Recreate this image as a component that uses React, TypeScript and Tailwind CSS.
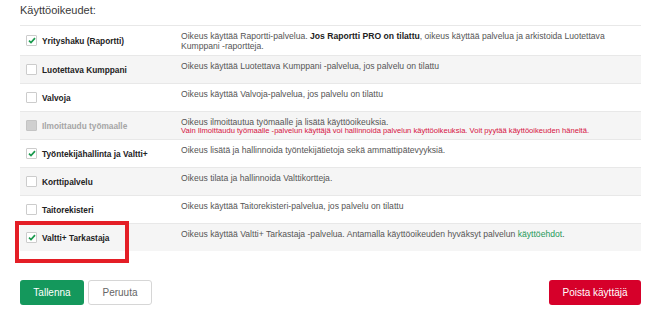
import React from "react";

type Row = {
  label: string;
  checked?: boolean;
  disabled?: boolean;
  desc: React.ReactNode;
  note?: string;
};

const rows: Row[] = [
  {
    label: "Yrityshaku (Raportti)",
    checked: true,
    desc: (
      <>
        Oikeus käyttää Raportti-palvelua. <b className="font-bold text-[#222]">Jos Raportti PRO on tilattu</b>, oikeus
        käyttää palvelua ja arkistoida Luotettava Kumppani -raportteja.
      </>
    ),
  },
  { label: "Luotettava Kumppani", desc: "Oikeus käyttää Luotettava Kumppani -palvelua, jos palvelu on tilattu" },
  { label: "Valvoja", desc: "Oikeus käyttää Valvoja-palvelua, jos palvelu on tilattu" },
  {
    label: "Ilmoittaudu työmaalle",
    disabled: true,
    desc: "Oikeus ilmoittautua työmaalle ja lisätä käyttöoikeuksia.",
    note: "Vain Ilmoittaudu työmaalle -palvelun käyttäjä voi hallinnoida palvelun käyttöoikeuksia. Voit pyytää käyttöoikeuden häneltä.",
  },
  {
    label: "Työntekijähallinta ja Valtti+",
    checked: true,
    desc: "Oikeus lisätä ja hallinnoida työntekijätietoja sekä ammattipätevyyksiä.",
  },
  { label: "Korttipalvelu", desc: "Oikeus tilata ja hallinnoida Valttikortteja." },
  { label: "Taitorekisteri", desc: "Oikeus käyttää Taitorekisteri-palvelua, jos palvelu on tilattu" },
  {
    label: "Valtti+ Tarkastaja",
    checked: true,
    desc: (
      <>
        Oikeus käyttää Valtti+ Tarkastaja -palvelua. Antamalla käyttöoikeuden hyväksyt palvelun{" "}
        <span className="text-[#1f9a5a]">käyttöehdot</span>.
      </>
    ),
  },
];

function Checkbox({ checked, disabled }: { checked?: boolean; disabled?: boolean }) {
  if (disabled) {
    return <div className="w-[11px] h-[11px] rounded-[1px] bg-[#cfcfcf] border border-[#c4c4c4] shrink-0" />;
  }
  return (
    <div className="w-[11px] h-[11px] rounded-[1px] bg-white border border-[#cccccc] shrink-0 flex items-center justify-center">
      {checked && (
        <svg width="8" height="7" viewBox="0 0 8 7">
          <path d="M1 3.6 L3 5.5 L7 1.2" fill="none" stroke="#1a9a4e" strokeWidth="1.7" />
        </svg>
      )}
    </div>
  );
}

export default function App() {
  return (
    <div
      className="relative w-[670px] h-[314px] bg-white pl-[20px] pr-[29px] text-[#444]"
      style={{ fontFamily: '"Liberation Sans", Arial, sans-serif' }}
    >
      <div className="h-[25px] pt-[4px] text-[11px] leading-[13px] text-[#3a3a3a]">Käyttöoikeudet:</div>
      <div className="flex flex-col">
        {rows.map((r, i) => (
          <div
            key={i}
            className={`flex min-h-[28px] border-t border-[#e8e8e8] ${i % 2 === 1 ? "bg-[#f5f5f5]" : "bg-white"}`}
          >
            <div className="w-[161px] shrink-0 pl-[6px] flex items-center gap-[5px]">
              <Checkbox checked={r.checked} disabled={r.disabled} />
              <span
                className={`text-[8.3px] font-bold leading-[10px] ${r.disabled ? "text-[#a5a5a5]" : "text-[#222]"}`}
              >
                {r.label}
              </span>
            </div>
            <div className="flex-1 pt-[5px] pb-[4px] text-[8.6px] leading-[10px] text-[#555]">
              <div>{r.desc}</div>
              {r.note && <div className="text-[7.6px] leading-[8px] text-[#d6123f]">{r.note}</div>}
            </div>
          </div>
        ))}
      </div>
      <div className="flex items-center justify-between mt-[29px]">
        <div className="flex gap-[4px]">
          <button className="w-[64px] h-[25px] rounded-[3px] bg-[#14985c] text-white text-[10px]">Tallenna</button>
          <button className="w-[64px] h-[25px] rounded-[3px] bg-white border border-[#d6d6d6] text-[#666] text-[10px]">
            Peruuta
          </button>
        </div>
        <button className="w-[92px] h-[25px] rounded-[3px] bg-[#d6002a] text-white text-[10px]">Poista käyttäjä</button>
      </div>
      <div className="absolute left-[15px] top-[221px] w-[114px] h-[42px] border-[4px] border-[#e41e26] pointer-events-none" />
    </div>
  );
}
